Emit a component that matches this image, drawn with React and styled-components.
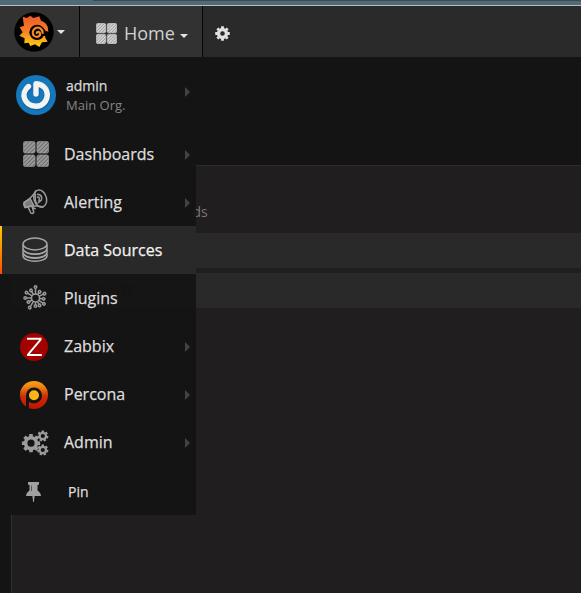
import React from 'react';
import styled, { createGlobalStyle, css } from 'styled-components';

const GlobalStyle = createGlobalStyle`
  * { box-sizing: border-box; }
  body { margin: 0; background: #141414; overflow: hidden; }
`;

const Screen = styled.div`
  position: relative;
  display: flex;
  flex-direction: column;
  width: 581px;
  height: 593px;
  background: #141414;
  color: #d8d9da;
  font-family: 'Open Sans', 'Noto Sans CJK SC', sans-serif;
  overflow: hidden;
`;
const WindowEdge = styled.div`
  flex: none;
  height: 6px;
  background: linear-gradient(#3b4b52, #3b4b52) 93px 0 / 100% 1px no-repeat, #506b77;
  border-bottom: 1px solid #b4bfbd;
`;
const Navbar = styled.header`
  flex: none;
  display: flex;
  height: 51px;
  background: #2a2a2a;
`;
const LogoButton = styled.div`
  display: flex;
  align-items: center;
  width: 80px;
  padding-left: 14px;
  background: #323232;
  border-right: 1px solid #050505;
`;
const HomeButton = styled.div`
  display: flex;
  align-items: center;
  width: 123px;
  padding: 3px 0 0 16px;
  background: #323232;
  border-right: 1px solid #050505;
`;
const HomeLabel = styled.span`
  margin: -1px 6px 0 7px;
  font-size: 18px;
  line-height: 24px;
  color: #d0d0d0;
`;
const SettingsButton = styled.div`
  display: flex;
  align-items: center;
  padding: 4px 0 0 12px;
`;
const Caret = styled.i`
  width: 0;
  border: 4px solid transparent;
  border-top-color: #e3e3e3;
  border-bottom: 0;
  margin: ${(p) => p.$margin || 0};
`;
const Content = styled.main`
  flex: 1;
  padding: 108px 0 0 11px;
`;
const Panel = styled.section`
  height: 428px;
  padding-top: 8px;
  background: #201e1f;
  border-top: 1px solid #2d2b2c;
  border-left: 1px solid #302e2f;
`;
const ListHeading = styled.h6`
  margin: 0;
  padding-left: 11px;
  height: ${(p) => p.$height}px;
  font-size: 14px;
  font-weight: 400;
  line-height: 20px;
  letter-spacing: -0.03px;
  color: #000;
`;
const Visible = styled.span`
  color: #777;
`;
const ListRow = styled.div`
  height: 35px;
  margin-bottom: 5px;
  padding-left: 36px;
  background: #292929;
  font-size: 14px;
  line-height: 35px;
  color: #000;
`;
const SideMenu = styled.nav`
  position: absolute;
  top: 57px;
  left: 0;
  width: 196px;
  height: 458px;
  background: rgba(20, 20, 20, 0.94);
  -webkit-text-stroke: 0.25px currentColor;
`;
const Profile = styled.div`
  display: flex;
  height: 73px;
  padding: 18px 5px 0 16px;
`;
const ProfileText = styled.div`
  flex: 1;
  padding: 1px 0 0 10px;
  font-size: 14px;
  line-height: 20px;
`;
const OrgName = styled.div`
  margin-top: -1px;
  font-size: 13px;
  line-height: 20px;
  color: #858585;
  -webkit-text-stroke: 0;
`;
const MenuItem = styled.div`
  display: flex;
  align-items: center;
  height: 48px;
  padding-right: 5px;
  font-size: 16px;
  color: #dedede;
  ${(p) => p.$active && css`
    color: #f2f2f2;
    background: linear-gradient(#ffcc00, #ff4c00) 0 0 / 2px 100% no-repeat, #292929;
  `}
`;
const IconCell = styled.span`
  display: flex;
  justify-content: center;
  width: 30px;
  margin: 0 14px 0 20px;
  padding: ${(p) => p.$nudge || 0};
`;
const ItemLabel = styled.span`
  flex: 1;
  line-height: 22px;
`;
const PinLabel = styled.span`
  padding: 3px 0 0 4px;
  font-size: 14px;
  line-height: 20px;
`;
const Arrow = styled.i`
  width: 0;
  height: 0;
  border: 5px solid transparent;
  border-left-color: #434343;
  border-right: 0;
  margin: ${(p) => p.$margin || '2px 1px 0 0'};
`;

const GrafanaLogo = () => (
  <svg width="40" height="40" viewBox="42 36 120 120">
    <defs>
      <linearGradient id="flame" x1="0" y1="0" x2="0" y2="1">
        <stop offset="0" stopColor="#f05a28" />
        <stop offset=".45" stopColor="#f47a29" />
        <stop offset="1" stopColor="#ffd20a" />
      </linearGradient>
    </defs>
    <circle cx="102" cy="96" r="59" fill="#000" />
    <path fill="url(#flame)" d="M68 50L81 54L91 47L100 54L118 49L123 62Q138 67 143 80L145 95L137 92Q139 105 135 112L143 125L126 127L118 141L105 133L91 138L86 128L73 130L74 115L58 107L68 97L59 82L72 77Z" />
    <circle cx="111" cy="97" r="23" fill="#000" />
    <path fill="#000" d="M129 83Q136 88 138 96L148 100L140 110L128 106Z" />
    <path fill="none" stroke="#f68c22" strokeWidth="6.5" strokeLinecap="round" d="M128 99C127 85 116 80 107 84C97 89 95 102 103 108C111 114 122 109 120 100C119 95 112 94 110 99" />
  </svg>
);

const DashIcon = ({ size, color, id }) => (
  <svg width={size} height={size} viewBox="0 0 26 26">
    <defs>
      <pattern id={id} width="2.8" height="2.8" patternUnits="userSpaceOnUse" patternTransform="rotate(45)">
        <rect width="2.8" height="2.8" fill={color} fillOpacity=".62" />
        <rect width="1.5" height="2.8" fill={color} />
      </pattern>
    </defs>
    {[[0.4, 0.4], [13.9, 0.4], [0.4, 13.9], [13.9, 13.9]].map(([x, y]) => (
      <rect key={`${x}-${y}`} x={x} y={y} width="11.7" height="11.7" rx="2" fill={`url(#${id})`} stroke={color} strokeWidth=".6" />
    ))}
  </svg>
);

const gearPath = (cx, cy, outer, inner, teeth, hole) => {
  const pts = [];
  for (let i = 0; i < teeth; i++) {
    [[-0.34, inner], [-0.24, outer], [0.24, outer], [0.34, inner]].forEach(([o, r]) => {
      const a = ((i + o) / teeth) * Math.PI * 2 - Math.PI / 2;
      pts.push(`${(cx + r * Math.cos(a)).toFixed(2)} ${(cy + r * Math.sin(a)).toFixed(2)}`);
    });
  }
  return `M${pts.join('L')}ZM${cx - hole} ${cy}a${hole} ${hole} 0 1 0 ${hole * 2} 0a${hole} ${hole} 0 1 0 ${-hole * 2} 0Z`;
};

const GearIcon = () => (
  <svg width="15" height="15" viewBox="0 0 15 15">
    <path fill="#e0e0e0" fillRule="evenodd" d={gearPath(7.5, 7.5, 7.4, 5.6, 8, 2.3)} />
  </svg>
);

const AdminIcon = () => (
  <svg width="28" height="26" viewBox="0 0 28 26">
    <g fill="#9b9b9b" fillRule="evenodd">
      <path d={gearPath(10, 13.2, 9.3, 7.2, 8, 3.6)} />
      <path d={gearPath(21.8, 6, 5.7, 4.3, 7, 2.1)} />
      <path d={gearPath(21.8, 20, 5.7, 4.3, 7, 2.1)} />
    </g>
  </svg>
);

const Avatar = () => (
  <svg width="40" height="40" viewBox="0 0 40 40">
    <circle cx="20" cy="20" r="20" fill="#1478bb" />
    <g fill="none" strokeLinecap="round" strokeLinejoin="round">
      <path d="M13 12C4 18 7 32 20 32C34 31 36 12 20 9V19" stroke="#0b548d" strokeWidth="5.8" opacity=".5" transform="translate(.6 .7)" />
      <path d="M12.5 11.5C4 18 8 31 20 31.2C34 31 36 10 20 8.8V19" stroke="#f4f3f2" strokeWidth="5.4" />
    </g>
  </svg>
);

const AlertIcon = () => (
  <svg width="26" height="26" viewBox="0 0 26 26" fill="none" stroke="#9b9b9b" strokeWidth="1.5" strokeLinejoin="round">
    <ellipse cx="18.2" cy="9.6" rx="6.2" ry="8.8" transform="rotate(-16 18.2 9.6)" />
    <path d="M14.2 1.4Q10 9 2.2 13.3Q1 16 3.2 18.5Q12 15.6 21.6 18" />
    <path d="M8.2 9.8L11.5 16.2L3.2 18.5L2.2 13.3Z" fill="#9b9b9b" fillOpacity=".75" />
    <path d="M6 18L8.8 24Q10.6 25.3 11.8 23.3L9.9 17M10.4 18L13.6 20.2" />
    <path d="M15 5.2L17.6 5.8Q20.6 7.2 19.3 11.2L16 13.8M14.8 8.2Q18.4 7 16.8 12.2" />
    <path d="M13.5 4.5Q12.2 12 15.5 15.5" />
  </svg>
);

const DatabaseIcon = () => (
  <svg width="26" height="26" viewBox="0 0 26 26" fill="none" stroke="#a6a6a6" strokeWidth="1.5">
    <ellipse cx="13" cy="7" rx="12" ry="5.9" />
    <path d="M1 8V11.6C2 18.8 24 18.8 25 11.6V8" />
    <path d="M1 12.6V15.6C2 22.4 24 22.4 25 15.6V12.6" />
    <path d="M1 16.6V18.8C2 26 24 26 25 18.8V16.6" />
    <path d="M1.5 13.3C4 19 22 19 24.5 13.3M1.5 17.4C4 22.8 22 22.8 24.5 17.4" strokeWidth="1" />
  </svg>
);

const PluginIcon = () => {
  const arms = [[0, 11], [33, 7.4], [64, 10], [96, 8.3], [125, 10.3], [151, 8.5], [180, 8], [211, 11.2], [240, 8.2], [270, 10.3], [301, 10.5], [329, 8.8]];
  return (
    <svg width="26" height="26" viewBox="0 0 26 26" fill="none" stroke="#9a9a9a" strokeWidth="1.5">
      <circle cx="13.5" cy="13" r="4" />
      {arms.map(([a, r]) => (
        <g key={a} transform={`translate(.5 0) rotate(${a} 13 13)`}>
          <path d={`M13 9V${14.2 - r}`} />
          <circle cx="13" cy={13 - r} r="1.25" />
        </g>
      ))}
    </svg>
  );
};

const ZabbixIcon = () => (
  <svg width="28" height="28" viewBox="0 0 28 28">
    <circle cx="14" cy="14" r="14" fill="#a30000" />
    <path d="M7 5.7H20.6V6.6L8 21.6V22H21.8" fill="none" stroke="#fff" strokeWidth="1.9" />
  </svg>
);

const PerconaIcon = () => (
  <svg width="28" height="28" viewBox="0 0 28 28">
    <defs>
      <linearGradient id="percona" x1="0" y1="0" x2="0" y2="1">
        <stop offset="0" stopColor="#f9a313" />
        <stop offset=".2" stopColor="#ee8510" />
        <stop offset=".55" stopColor="#cc2e08" />
        <stop offset="1" stopColor="#c41200" />
      </linearGradient>
    </defs>
    <circle cx="14" cy="14" r="14" fill="url(#percona)" />
    <path d="M6 28V14.4A8 8 0 1 1 14 22.4Q11 22.3 9 20.8V28Z" fill="#141414" />
    <circle cx="14" cy="14.3" r="5" fill="#ffb516" />
  </svg>
);

const PinIcon = () => (
  <svg width="15" height="20" viewBox="0 0 15 20">
    <path fill="#a1a1a1" d="M2 0H13V2.3Q13 3 11.5 3V8.4Q14.8 10.5 15 14H8.6L7.9 20H7.1L6.4 14H0Q.2 10.5 3.5 8.4V3Q2 3 2 2.3Z" />
    <path d="M5.5 3.5V9" stroke="#595959" strokeWidth="1" />
  </svg>
);

const items = [
  { label: 'Dashboards', icon: <DashIcon id="menu-hatch" size={26} color="#a5a5a5" />, arrow: true, nudge: '0 0 0 2px' },
  { label: 'Alerting', icon: <AlertIcon />, arrow: true },
  { label: 'Data Sources', icon: <DatabaseIcon />, active: true },
  { label: 'Plugins', icon: <PluginIcon /> },
  { label: 'Zabbix', icon: <ZabbixIcon />, arrow: true, nudge: '2px 2px 0 0' },
  { label: 'Percona', icon: <PerconaIcon />, arrow: true, nudge: '2px 2px 0 0' },
  { label: 'Admin', icon: <AdminIcon />, arrow: true, nudge: '2px 0 0 0' },
];

export default function App() {
  return (
    <Screen>
      <GlobalStyle />
      <WindowEdge />
      <Navbar>
        <LogoButton><GrafanaLogo /><Caret $margin="0 0 0 3px" /></LogoButton>
        <HomeButton>
          <DashIcon id="nav-hatch" size={21} color="#dedede" />
          <HomeLabel>Home</HomeLabel>
          <Caret $margin="5px 0 0 -1px" />
        </HomeButton>
        <SettingsButton><GearIcon /></SettingsButton>
      </Navbar>
      <Content>
        <Panel>
          <ListHeading $height={28}>Starred dashboards</ListHeading>
          <ListHeading $height={31}>Recently viewed dashboar<Visible>ds</Visible></ListHeading>
          <ListRow />
          <ListRow>5_15分钟负载</ListRow>
        </Panel>
      </Content>
      <SideMenu>
        <Profile>
          <Avatar />
          <ProfileText>admin<OrgName>Main Org.</OrgName></ProfileText>
          <Arrow $margin="12px 1px 0 0" />
        </Profile>
        {items.map(({ label, icon, active, arrow, nudge }) => (
          <MenuItem key={label} $active={active}>
            <IconCell $nudge={nudge}>{icon}</IconCell>
            <ItemLabel>{label}</ItemLabel>
            {arrow && <Arrow />}
          </MenuItem>
        ))}
        <MenuItem>
          <IconCell $nudge="4px 3px 0 0"><PinIcon /></IconCell>
          <PinLabel>Pin</PinLabel>
        </MenuItem>
      </SideMenu>
    </Screen>
  );
}
